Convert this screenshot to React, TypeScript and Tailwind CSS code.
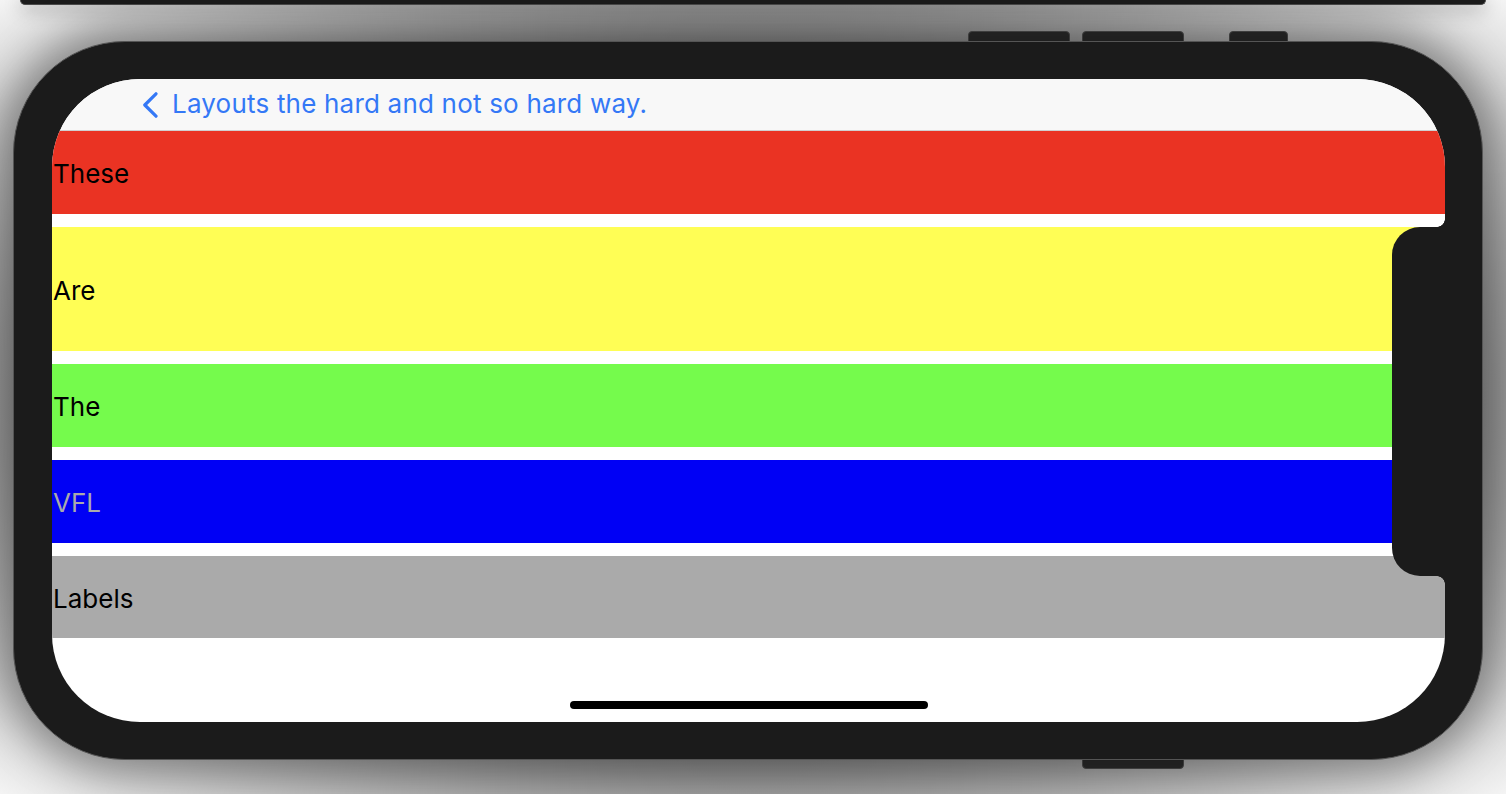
const rows = [
  { label: 'These', bg: 'bg-[#ea3323]', text: 'text-black', h: 'h-[83px]' },
  { label: 'Are', bg: 'bg-[#fffe55]', text: 'text-black', h: 'h-[124px]' },
  { label: 'The', bg: 'bg-[#75fb4c]', text: 'text-black', h: 'h-[83px]' },
  { label: 'VFL', bg: 'bg-[#0000f5]', text: 'text-[#aaaaaa]', h: 'h-[83px]' },
  { label: 'Labels', bg: 'bg-[#aaaaaa]', text: 'text-black', h: 'h-[82px]' },
];

function Chevron() {
  return (
    <svg width="17" height="26" viewBox="0 0 17 26" fill="none">
      <path d="M14 1.8L2.8 13L14 24.2" stroke="#3478f6" strokeWidth="3.2" strokeLinecap="round" strokeLinejoin="round" />
    </svg>
  );
}

export default function App() {
  return (
    <div className="relative w-[1506px] h-[794px] overflow-hidden bg-[#f2f2f2] font-['Inter','Noto_Sans',sans-serif]">
      <div className="absolute inset-0 bg-[radial-gradient(ellipse_at_center,#6e6e6e_55%,#f4f4f4_100%)]" />

      {/* device above, only its bottom edge shows */}
      <div className="relative mx-[20px] h-[5px] rounded-b-[10px] bg-[#1b1b1b] border-x border-b border-[#4a4a4a] shadow-[0_4px_18px_rgba(0,0,0,0.45)]" />

      {/* phone */}
      <div className="relative ml-[13px] mt-[36px] w-[1470px] h-[719px]">
        {/* side buttons */}
        <div className="absolute left-[955px] top-[-10px] w-[102px] h-[12px] rounded-t-[4px] bg-[#2b2b2b] border border-[#4e4e4e]" />
        <div className="absolute left-[1069px] top-[-10px] w-[102px] h-[12px] rounded-t-[4px] bg-[#2b2b2b] border border-[#4e4e4e]" />
        <div className="absolute left-[1216px] top-[-10px] w-[59px] h-[12px] rounded-t-[4px] bg-[#2b2b2b] border border-[#4e4e4e]" />
        <div className="absolute left-[1069px] bottom-[-9px] w-[102px] h-[11px] rounded-b-[4px] bg-[#2b2b2b] border border-[#4e4e4e]" />

        <div className="relative w-full h-full rounded-[112px] bg-[#1b1b1b] border border-[#555555] pl-[38px] pt-[37px] pr-[37px] pb-[37px] shadow-[0_0_40px_14px_rgba(0,0,0,0.35)]">
          <div className="relative w-[1393px] h-[643px] rounded-[88px] overflow-hidden bg-white flex flex-col">
            {/* navigation bar */}
            <div className="h-[52px] shrink-0 bg-[#f8f8f8] border-b border-[#d0d0d0] flex items-center pl-[90px] gap-[13px]">
              <Chevron />
              <span className="text-[26px] leading-none text-[#3478f6] tracking-[0.2px] pb-px">Layouts the hard and not so hard way.</span>
            </div>

            <div className="flex flex-col gap-[13px]">
              {rows.map((r) => (
                <div key={r.label} className={`${r.h} ${r.bg} flex items-center pl-px pt-[3px]`}>
                  <span className={`text-[26px] leading-none ${r.text}`}>{r.label}</span>
                </div>
              ))}
            </div>

            <div className="flex-1 flex items-end justify-center pb-[13px]">
              <div className="w-[358px] h-[8px] rounded-full bg-black" />
            </div>

            {/* sensor housing */}
            <div className="absolute right-0 top-[148px] w-[53px] h-[349px] rounded-l-[28px] bg-[#1b1b1b]" />
            <div className="absolute right-0 top-[140px] w-[8px] h-[8px] bg-[radial-gradient(circle_at_0_0,transparent_7.5px,#1b1b1b_8px)]" />
            <div className="absolute right-0 top-[497px] w-[8px] h-[8px] bg-[radial-gradient(circle_at_0_100%,transparent_7.5px,#1b1b1b_8px)]" />
          </div>
        </div>
      </div>
    </div>
  );
}
